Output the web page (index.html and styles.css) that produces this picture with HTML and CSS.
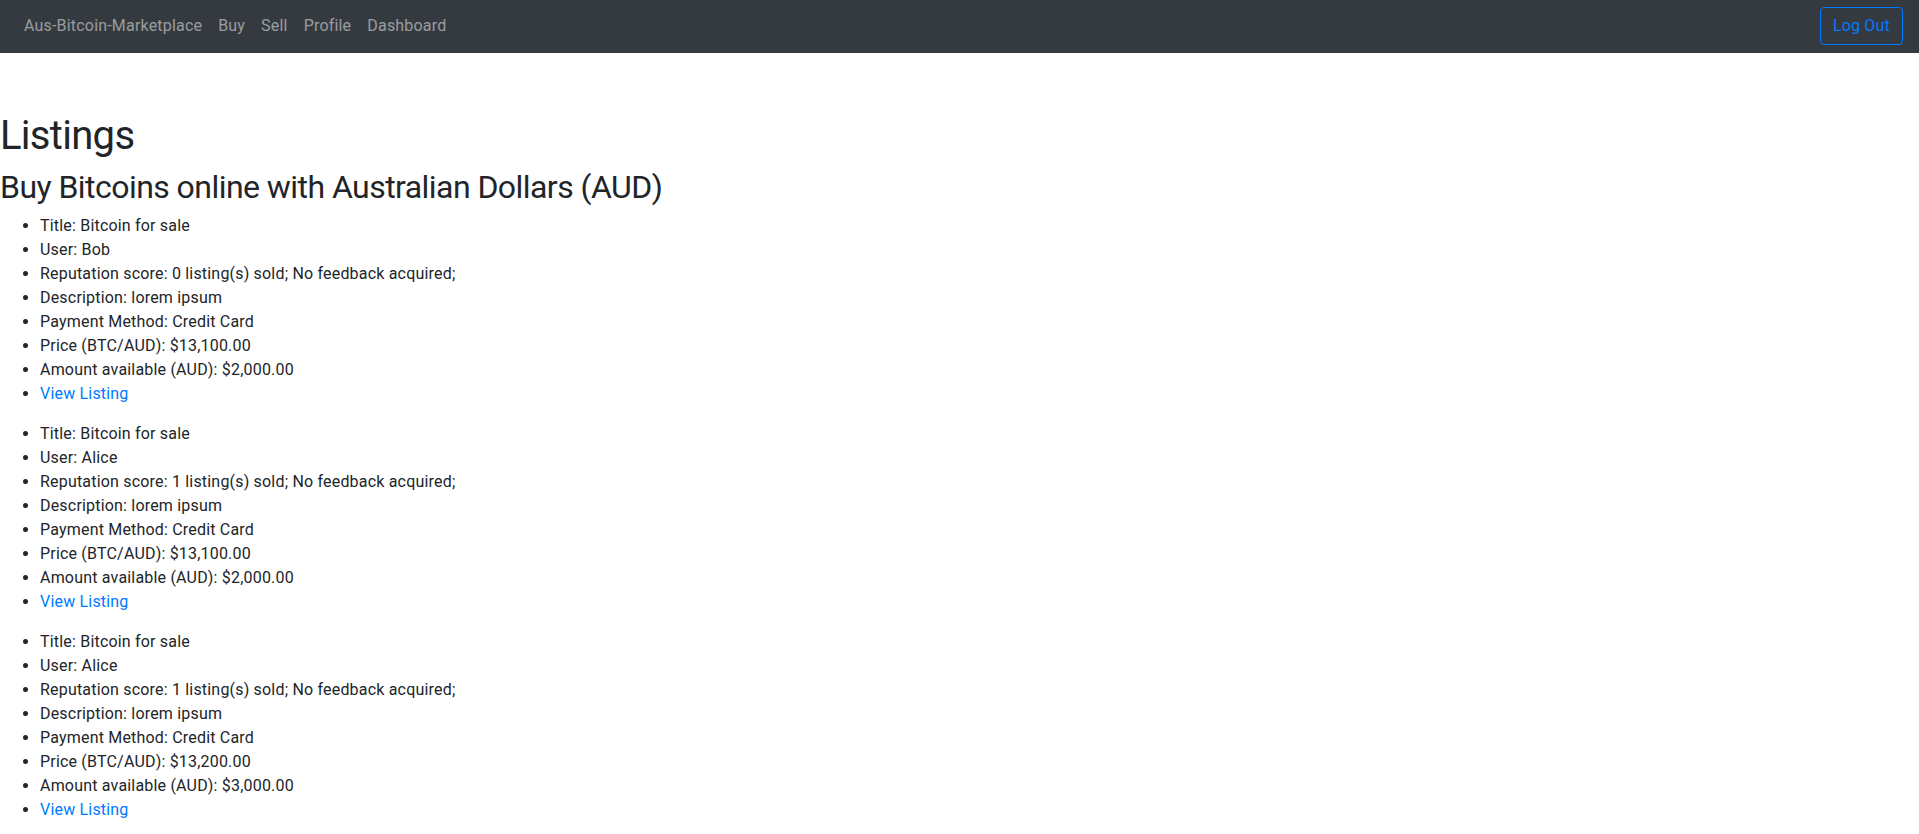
FILE: index.html
```html
<!DOCTYPE html>
<html lang="en">
<head>
<meta charset="utf-8">
<title>Aus-Bitcoin-Marketplace</title>
<link rel="stylesheet" href="styles.css">
</head>
<body>
<nav class="navbar">
  <ul class="nav-links">
    <li><a class="nav-link" href="#">Aus-Bitcoin-Marketplace</a></li>
    <li><a class="nav-link" href="#">Buy</a></li>
    <li><a class="nav-link" href="#">Sell</a></li>
    <li><a class="nav-link" href="#">Profile</a></li>
    <li><a class="nav-link" href="#">Dashboard</a></li>
  </ul>
  <button class="btn-logout" type="button">Log Out</button>
</nav>
<main class="content">
  <h1 class="title">Listings</h1>
  <h2 class="subtitle">Buy Bitcoins online with Australian Dollars (AUD)</h2>
  <ul class="listing">
    <li>Title: Bitcoin for sale</li>
    <li>User: Bob</li>
    <li>Reputation score: 0 listing(s) sold; No feedback acquired;</li>
    <li>Description: lorem ipsum</li>
    <li>Payment Method: Credit Card</li>
    <li>Price (BTC/AUD): $13,100.00</li>
    <li>Amount available (AUD): $2,000.00</li>
    <li><a class="link" href="#">View Listing</a></li>
  </ul>
  <ul class="listing">
    <li>Title: Bitcoin for sale</li>
    <li>User: Alice</li>
    <li>Reputation score: 1 listing(s) sold; No feedback acquired;</li>
    <li>Description: lorem ipsum</li>
    <li>Payment Method: Credit Card</li>
    <li>Price (BTC/AUD): $13,100.00</li>
    <li>Amount available (AUD): $2,000.00</li>
    <li><a class="link" href="#">View Listing</a></li>
  </ul>
  <ul class="listing">
    <li>Title: Bitcoin for sale</li>
    <li>User: Alice</li>
    <li>Reputation score: 1 listing(s) sold; No feedback acquired;</li>
    <li>Description: lorem ipsum</li>
    <li>Payment Method: Credit Card</li>
    <li>Price (BTC/AUD): $13,200.00</li>
    <li>Amount available (AUD): $3,000.00</li>
    <li><a class="link" href="#">View Listing</a></li>
  </ul>
</main>
</body>
</html>
```

FILE: styles.css
```css
* { box-sizing: border-box; }
html, body {
  margin: 0;
  padding: 0;
}
body {
  font-family: Roboto, "Noto Sans", "Liberation Sans", sans-serif;
  font-size: 16px;
  line-height: 1.5;
  letter-spacing: 0.19px;
  color: #212529;
  background: #fff;
}
.navbar {
  display: flex;
  align-items: center;
  justify-content: space-between;
  background: #343a40;
  padding: 0 16px 2px;
  height: 53px;
}
.nav-links {
  display: flex;
  list-style: none;
  margin: 0;
  padding: 0;
}
.nav-link {
  display: block;
  padding: 8px;
  color: rgba(255, 255, 255, 0.5);
  text-decoration: none;
}
.btn-logout {
  font-family: inherit;
  font-size: 16px;
  line-height: 1.5;
  letter-spacing: inherit;
  padding: 6px 12px;
  color: #007bff;
  background: transparent;
  border: 1px solid #007bff;
  border-radius: 4px;
}
.content {
  padding-top: 59px;
}
.title {
  font-size: 40px;
  font-weight: 400;
  line-height: 1.2;
  letter-spacing: -0.7px;
  margin: 0 0 8px;
}
.subtitle {
  font-size: 32px;
  font-weight: 400;
  line-height: 1.2;
  letter-spacing: -0.55px;
  margin: 0 0 8px;
}
.listing {
  margin: 0 0 16px;
  padding-left: 40px;
}
.link {
  color: #007bff;
  text-decoration: none;
}
```
